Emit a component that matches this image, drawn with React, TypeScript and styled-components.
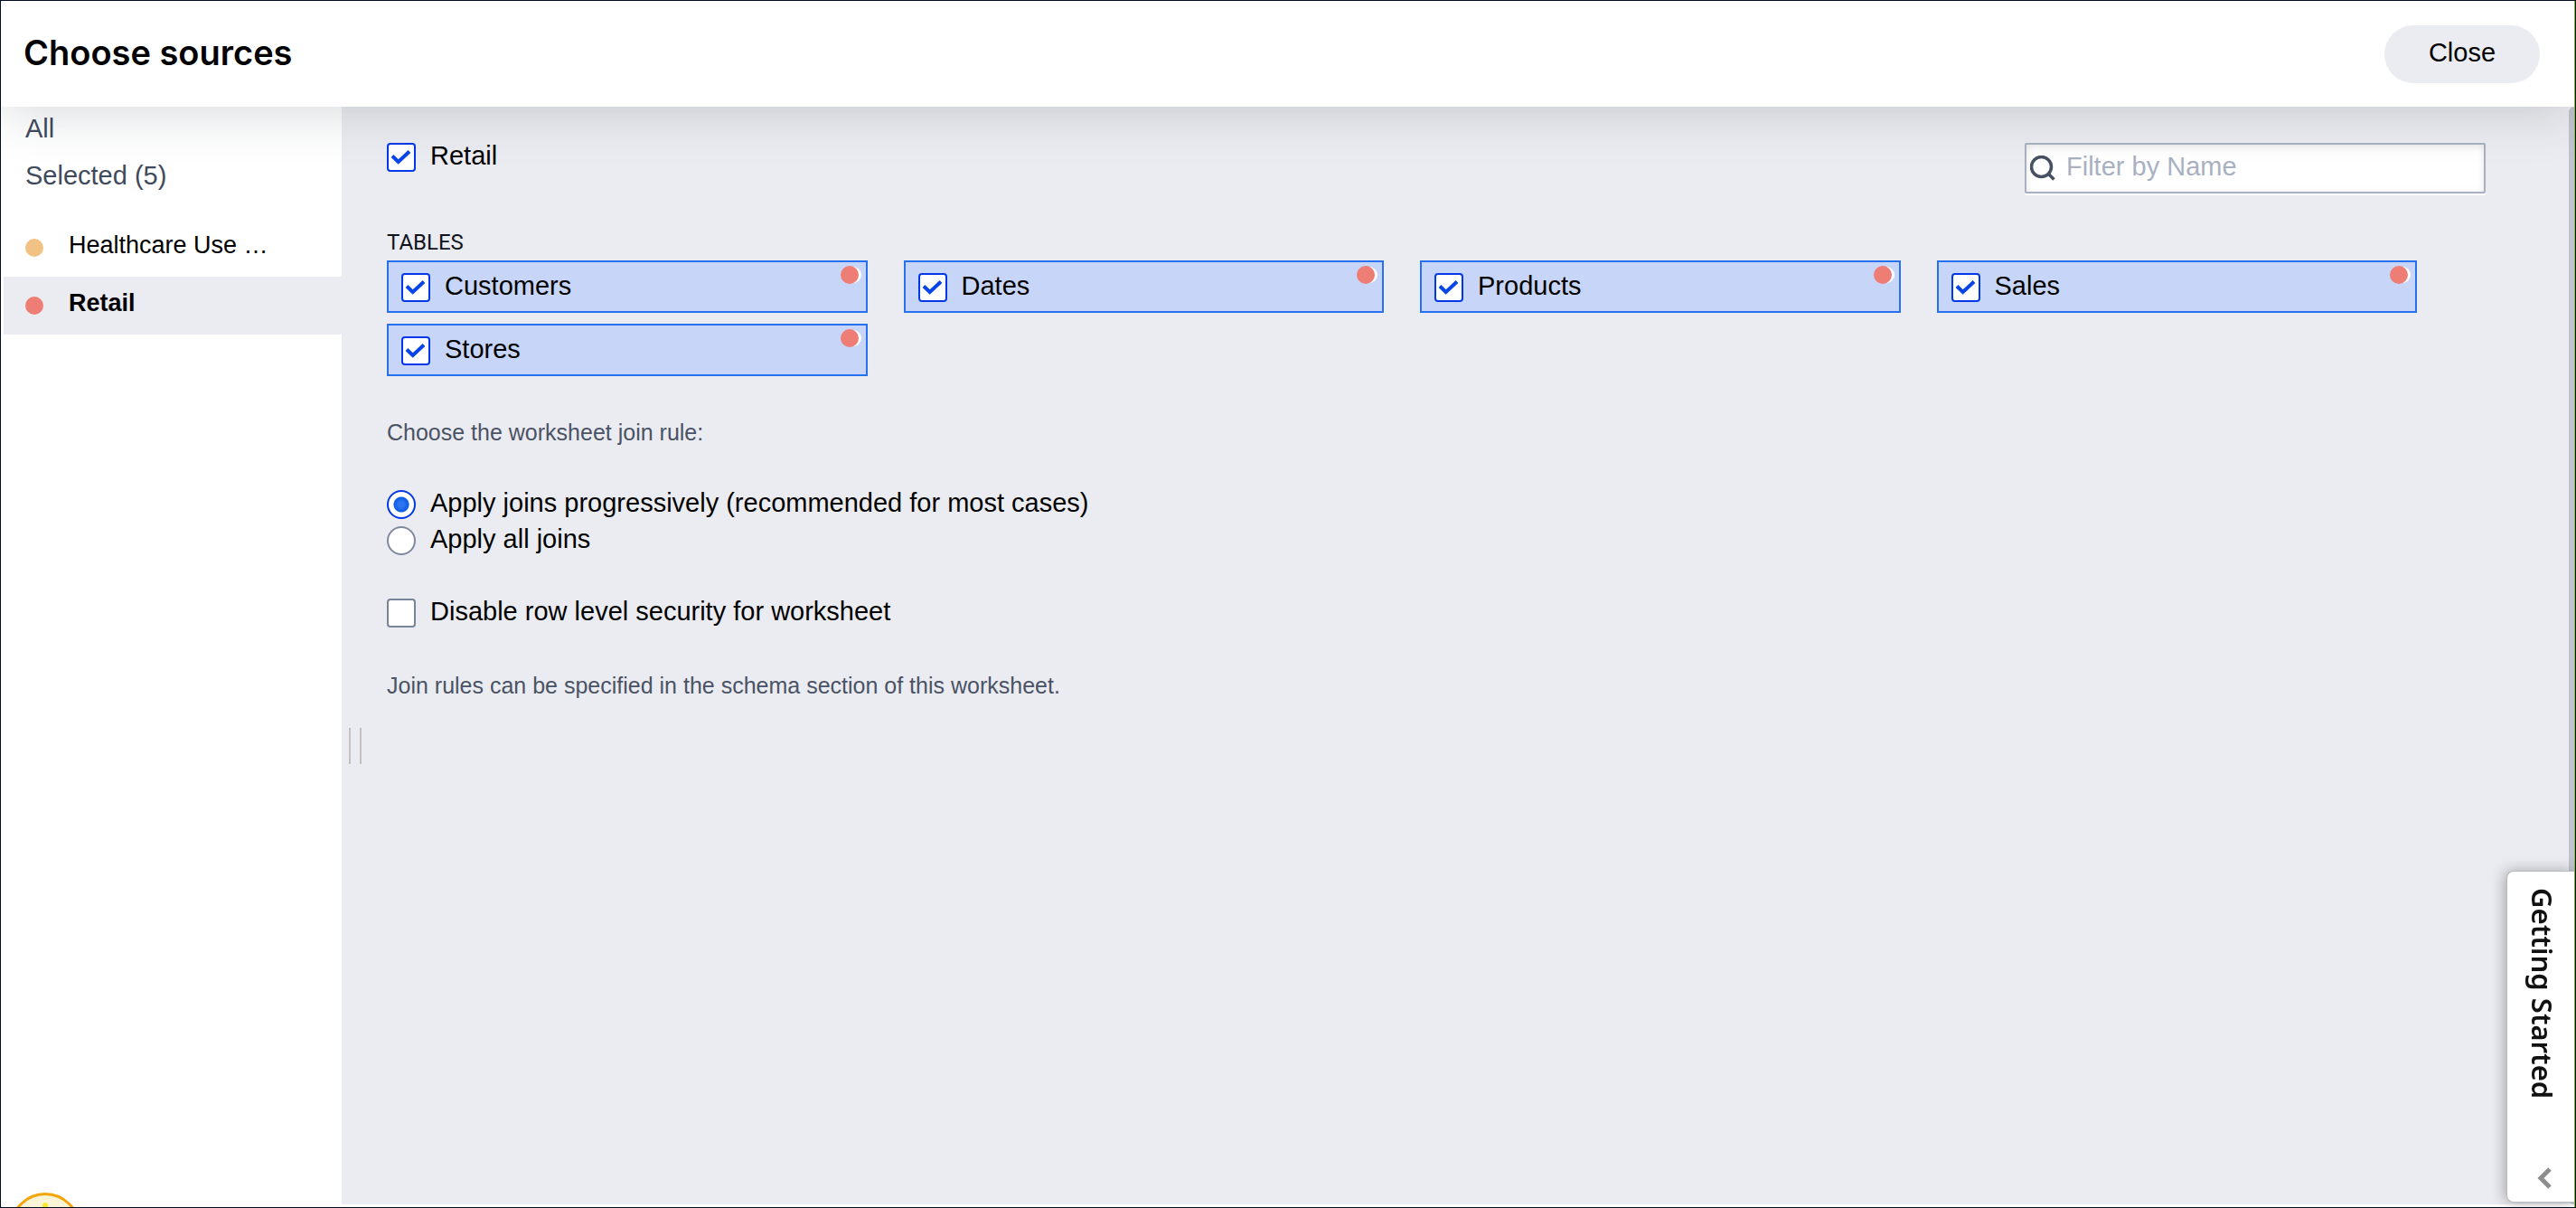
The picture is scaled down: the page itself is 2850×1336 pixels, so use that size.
import React from "react";
import styled, { createGlobalStyle } from "styled-components";

const GlobalStyle = createGlobalStyle`
  * { box-sizing: border-box; }
  body { margin: 0; background: #ebecf1; }
`;

const Dialog = styled.div`
  position: relative;
  height: 100vh;
  display: flex;
  flex-direction: column;
  overflow: hidden;
  padding-right: 1px;
  border: 1px solid #020d1f;
  color: #000;
  background: #8fc800;
  font: 400 29px/32px "Liberation Sans", Arial, sans-serif;
`;

const Header = styled.header`
  position: relative;
  z-index: 1;
  display: flex;
  align-items: center;
  justify-content: space-between;
  flex: none;
  height: 117px;
  padding: 0 38px 0 25px;
  background: #fff;
  box-shadow: 0 4px 60px rgba(37, 51, 62, 0.2);
`;

const Title = styled.h1`
  margin: 0;
  padding-bottom: 4px;
  font: 600 38px/48px Inter, sans-serif;
`;

const CloseButton = styled.button`
  min-width: 172px;
  height: 64px;
  padding: 0 40px 4px;
  border: 0;
  border-radius: 32px;
  background: #ebecf1;
  color: #000;
  font: inherit;
`;

const Body = styled.div`
  flex: 1;
  min-height: 0;
  display: flex;
  padding: 0 0 3px 3px;
  background: #fff;
`;

const Sidebar = styled.nav`
  flex: none;
  width: 374px;
  display: flex;
  flex-direction: column;
`;

const Scope = styled.a`
  padding: 8px 24px 12px;
  color: #3f4a5c;
  text-decoration: none;
`;

const SourceList = styled.ul`
  list-style: none;
  margin: 20px 0 0;
  padding: 0;
`;

const Dot = styled.span<{ $color: string }>`
  flex: none;
  width: 20px;
  height: 20px;
  border-radius: 50%;
  background: ${(p) => p.$color};
`;

const SourceLink = styled.a<{ $active?: boolean }>`
  display: flex;
  align-items: center;
  gap: 28px;
  height: 64px;
  padding: 0 24px;
  color: #000;
  text-decoration: none;
  font-size: 27px;
  font-weight: ${(p) => (p.$active ? 700 : 400)};
  background: ${(p) => (p.$active ? "#ebecf1" : "transparent")};
`;

const SourceName = styled.span`
  padding-bottom: 6px;
`;

const Splitter = styled.div`
  flex: none;
  width: 30px;
  display: flex;
  align-items: center;
  padding: 0 8px;

  &::before {
    content: "";
    width: 14px;
    height: 40px;
    margin-top: 200px;
    border: solid #c4c1c0;
    border-width: 0 2px;
  }
`;

const Main = styled.main`
  flex: 1;
  min-width: 0;
  display: flex;
  background: #ebecf1;
`;

const Content = styled.div`
  flex: 1;
  padding: 40px 92px 0 20px;
`;

const TopRow = styled.div`
  display: flex;
  justify-content: space-between;
  align-items: flex-start;
`;

const Option = styled.label`
  display: flex;
  align-items: flex-start;
  gap: 16px;
  height: 32px;
`;

const OptionText = styled.span`
  line-height: 28px;
`;

const CheckInput = styled.input.attrs({ type: "checkbox" })`
  appearance: none;
  display: block;
  width: 32px;
  height: 32px;
  margin: 0;
  border: 2px solid #78849a;
  border-radius: 4px;
  background: #fff;

  &:checked {
    border-color: #0238e8;
  }
`;

const CheckBox = styled.span`
  position: relative;
  flex: none;
  width: 32px;
  height: 32px;

  svg {
    position: absolute;
    inset: 0;
    pointer-events: none;
    visibility: hidden;
  }

  input:checked + svg {
    visibility: visible;
  }
`;

const RadioInput = styled.input.attrs({ type: "radio" })`
  appearance: none;
  flex: none;
  width: 32px;
  height: 32px;
  margin: 0;
  border: 2px solid #8089a0;
  border-radius: 50%;
  background: #fff;

  &:checked {
    border-color: #0238e8;
    background: radial-gradient(circle, #2d74ee 3px, #0a5be8 8px, #fff 9px);
  }
`;

const SearchBox = styled.label`
  display: flex;
  align-items: center;
  gap: 12px;
  width: 510px;
  height: 56px;
  padding: 0 4px;
  border: 2px solid #a9b1c1;
  border-radius: 2px;
  background: #fff;
  box-shadow: inset 0 2px 8px rgba(0, 0, 0, 0.1), 0 2px 0 #fff;
`;

const SearchInput = styled.input`
  flex: 1;
  min-width: 0;
  padding: 0 0 4px;
  border: 0;
  outline: 0;
  background: transparent;
  font: inherit;

  &::placeholder {
    color: #a9b1c1;
    opacity: 1;
  }
`;

const GroupTitle = styled.h2`
  margin: 42px 0 8px;
  font: 400 24px/24px Roboto, sans-serif;
  color: #10131c;
`;

const Tables = styled.div`
  display: grid;
  grid-template-columns: repeat(4, 1fr);
  gap: 12px 40px;
  padding-right: 76px;
`;

const TableCard = styled.label`
  position: relative;
  display: flex;
  align-items: flex-start;
  gap: 16px;
  height: 58px;
  padding: 12px 14px;
  border: 2px solid #2770ef;
  background: #c7d6f8;
`;

const CardDot = styled(Dot)`
  position: absolute;
  top: 4px;
  right: 8px;
  box-shadow: 4px 0 0 -1px #fff;
`;

const JoinRules = styled.section`
  display: flex;
  flex-direction: column;
  gap: 48px;
  padding-top: 46px;
`;

const Note = styled.p`
  margin: 0;
  font-size: 25px;
  line-height: 32px;
  color: #4a5365;
`;

const RuleOptions = styled.div`
  display: flex;
  flex-direction: column;
  gap: 8px;
`;

const ScrollThumb = styled.div`
  width: 6px;
  flex: none;
  border-radius: 6px 0 0 6px;
  background: #c0c4ce;
`;

const HelpTab = styled.button`
  position: fixed;
  z-index: 2;
  right: 2px;
  bottom: 6px;
  width: 75px;
  height: 367px;
  display: flex;
  flex-direction: column;
  align-items: center;
  justify-content: space-between;
  padding: 18px 0 14px 4px;
  border: 1px solid #b9b9bb;
  border-right: 0;
  border-radius: 8px 0 0 8px;
  background: #fff;
  color: #111;
  box-shadow: -2px 0 16px rgba(0, 0, 0, 0.3);

  svg {
    margin-left: 4px;
  }
`;

const HelpText = styled.span`
  writing-mode: vertical-rl;
  font: 600 31px/40px "Noto Sans", "Open Sans", sans-serif;
`;

const Tip = styled.button`
  position: absolute;
  left: 10px;
  bottom: -62px;
  width: 78px;
  height: 78px;
  display: flex;
  justify-content: center;
  padding: 8px 0 0;
  border: 3px solid #f5a50c;
  border-radius: 50%;
  background: #fbf5d8;

  &::before {
    content: "";
    width: 6px;
    height: 20px;
    border-radius: 3px;
    background: #fbe92a;
  }
`;

function Check(props: { id: string; checked?: boolean }) {
  return (
    <CheckBox>
      <CheckInput id={props.id} defaultChecked={props.checked} />
      <svg viewBox="0 0 32 32" fill="none" stroke="#0745e8" strokeWidth="4">
        <path d="M6 14.5 L12.7 21 L25 9.5" />
      </svg>
    </CheckBox>
  );
}

const tables = ["Customers", "Dates", "Products", "Sales", "Stores"];

export default function App() {
  return (
    <Dialog>
      <GlobalStyle />
      <Header>
        <Title>Choose sources</Title>
        <CloseButton type="button">Close</CloseButton>
      </Header>
      <Body>
        <Sidebar>
          <Scope href="#all">All</Scope>
          <Scope href="#selected">Selected (5)</Scope>
          <SourceList>
            <li>
              <SourceLink href="#healthcare">
                <Dot $color="#f1c283" />
                <SourceName>Healthcare Use …</SourceName>
              </SourceLink>
            </li>
            <li>
              <SourceLink href="#retail" $active>
                <Dot $color="#ee7d75" />
                <SourceName>Retail</SourceName>
              </SourceLink>
            </li>
          </SourceList>
        </Sidebar>
        <Main>
          <Splitter />
          <Content>
            <TopRow>
              <Option htmlFor="retail-all">
                <Check id="retail-all" checked />
                <OptionText>Retail</OptionText>
              </Option>
              <SearchBox htmlFor="filter">
                <svg width="28" height="28" viewBox="0 0 28 28" fill="none" stroke="#475163" strokeWidth="3.5">
                  <circle cx="12.5" cy="12.5" r="11" />
                  <path d="M20 20 L26.5 26.5" />
                </svg>
                <SearchInput id="filter" placeholder="Filter by Name" />
              </SearchBox>
            </TopRow>
            <GroupTitle>TABLES</GroupTitle>
            <Tables>
              {tables.map((name) => (
                <TableCard key={name} htmlFor={`table-${name}`}>
                  <Check id={`table-${name}`} checked />
                  <OptionText>{name}</OptionText>
                  <CardDot $color="#ee7d75" />
                </TableCard>
              ))}
            </Tables>
            <JoinRules>
              <Note>Choose the worksheet join rule:</Note>
              <RuleOptions>
                <Option htmlFor="progressive">
                  <RadioInput id="progressive" name="join" defaultChecked />
                  <OptionText>Apply joins progressively (recommended for most cases)</OptionText>
                </Option>
                <Option htmlFor="all-joins">
                  <RadioInput id="all-joins" name="join" />
                  <OptionText>Apply all joins</OptionText>
                </Option>
              </RuleOptions>
              <Option htmlFor="disable-rls">
                <Check id="disable-rls" />
                <OptionText>Disable row level security for worksheet</OptionText>
              </Option>
              <Note>Join rules can be specified in the schema section of this worksheet.</Note>
            </JoinRules>
          </Content>
          <ScrollThumb />
        </Main>
      </Body>
      <Tip type="button" aria-label="Tips" />
      <HelpTab type="button">
        <HelpText>Getting Started</HelpText>
        <svg width="20" height="24" viewBox="0 0 20 24" fill="none" stroke="#8e8e8e" strokeWidth="5">
          <path d="M16 2 L6 12 L16 22" />
        </svg>
      </HelpTab>
    </Dialog>
  );
}
